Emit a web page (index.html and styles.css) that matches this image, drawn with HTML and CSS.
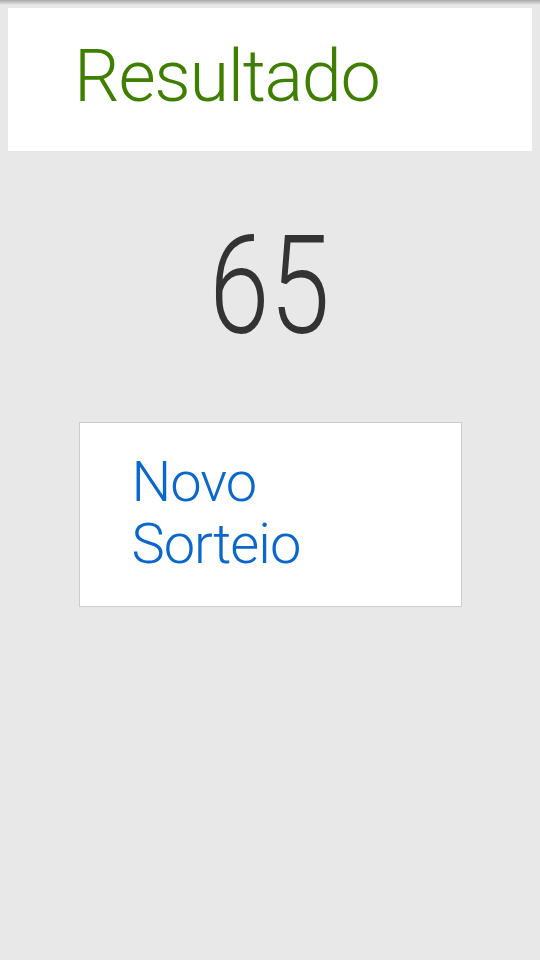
FILE: index.html
```html
<!DOCTYPE html>
<html lang="pt">
<head>
<meta charset="utf-8">
<title>Resultado</title>
<link rel="stylesheet" href="styles.css">
</head>
<body>
<div class="topshade"></div>
<header class="header">
  <h1 class="title">Resultado</h1>
</header>
<main class="content">
  <div class="number">65</div>
  <button class="btn">Novo<br>Sorteio</button>
</main>
</body>
</html>
```
FILE: styles.css
```css
html, body {
  margin: 0;
  padding: 0;
  background: #e8e8e8;
  font-family: Roboto, "Noto Sans", sans-serif;
  height: 100%;
}
body {
  position: relative;
}
.topshade {
  position: absolute;
  top: 0;
  left: 0;
  right: 0;
  height: 5px;
  background: linear-gradient(#a8a8a8, #e8e8e8);
}
.header {
  position: relative;
  margin: 0 8px;
  top: 8px;
  height: 143px;
  background: #fff;
  display: flex;
  align-items: center;
  padding-left: 66px;
  box-sizing: border-box;
}
.title {
  margin: 0;
  font-weight: 300;
  font-size: 72px;
  line-height: 1;
  letter-spacing: -1.3px;
  color: #3f7f00;
  position: relative;
  top: -3px;
}
.content {
  display: flex;
  flex-direction: column;
  align-items: center;
  padding-top: 74px;
}
.number {
  font-weight: 300;
  font-size: 138px;
  line-height: 1;
  color: #333;
  transform: scaleX(0.79);
}
.btn {
  margin-top: 67px;
  width: 383px;
  height: 185px;
  background: #fff;
  border: 1px solid #cccccc;
  box-sizing: border-box;
  font-family: Roboto, "Noto Sans", sans-serif;
  font-weight: 300;
  font-size: 56px;
  line-height: 62px;
  letter-spacing: -1px;
  color: #0a68cc;
  text-align: left;
  padding: 0 0 4px 52px;
}
```
